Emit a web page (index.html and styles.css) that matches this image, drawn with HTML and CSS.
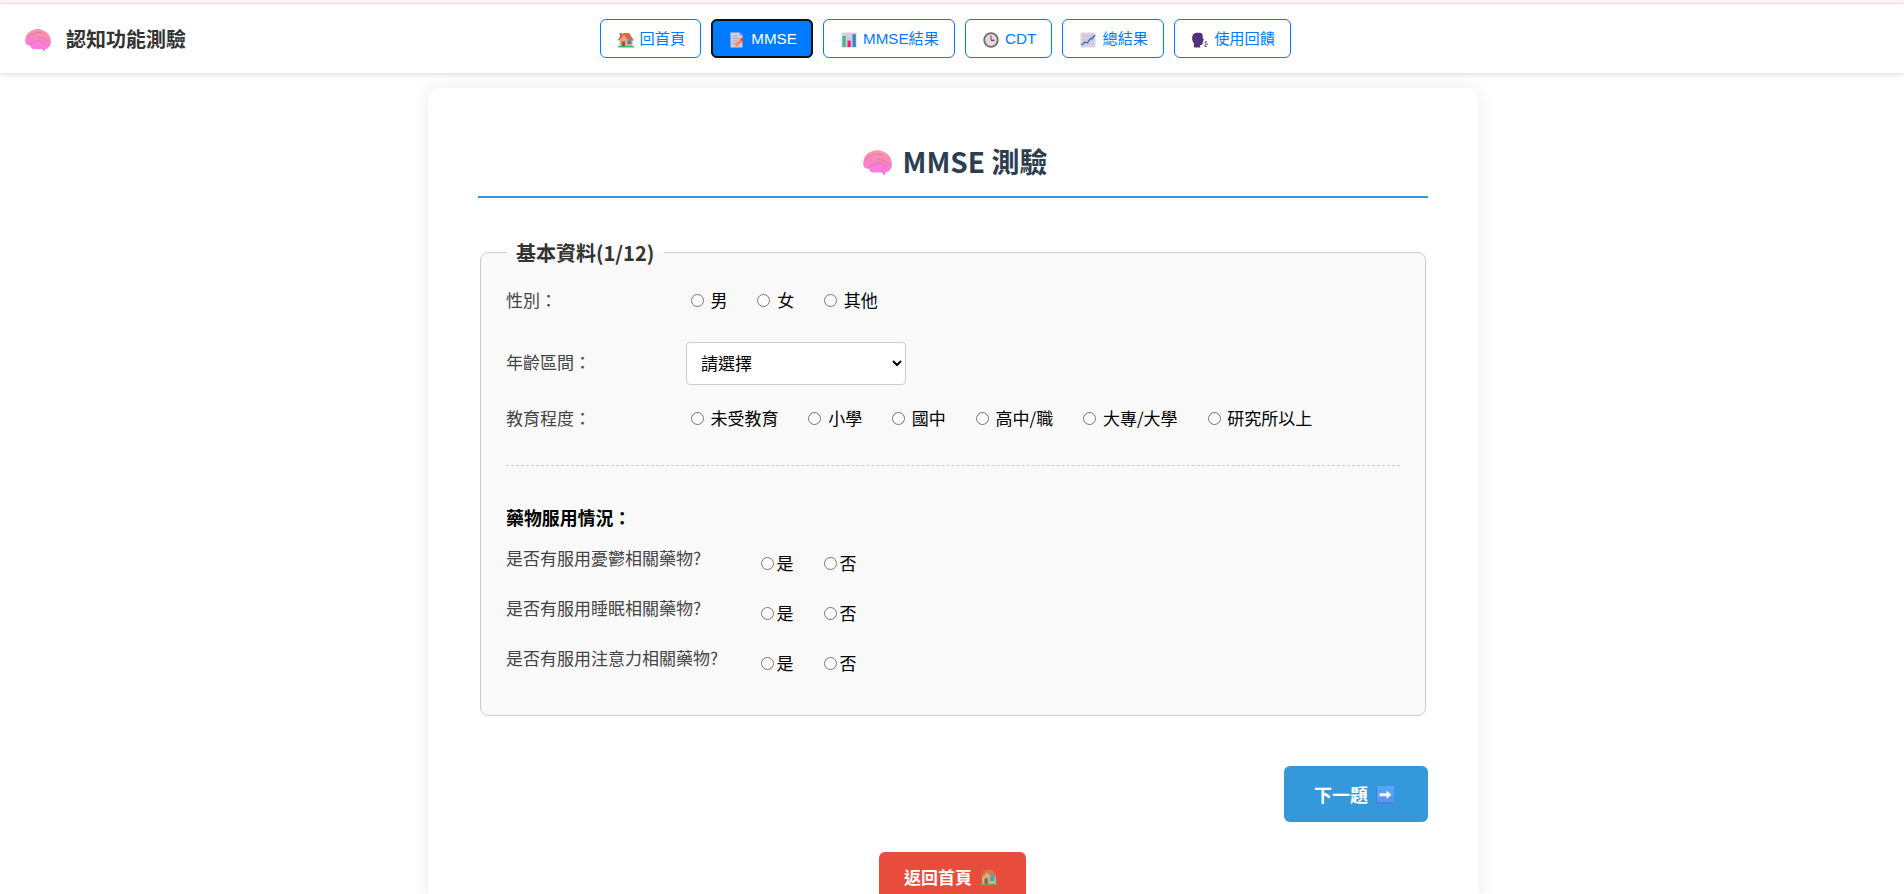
FILE: index.html
```html
<!DOCTYPE html>
<html lang="zh-Hant">
<head>
<meta charset="utf-8">
<title>認知功能測驗</title>
<link rel="stylesheet" href="styles.css">
</head>
<body>
<svg class="defs" aria-hidden="true">
  <defs>
    <linearGradient id="pink" x1="0.6" y1="0" x2="0.4" y2="1"><stop offset="0" stop-color="#fb9aa2"/><stop offset="0.55" stop-color="#f783c4"/><stop offset="1" stop-color="#fb78ee"/></linearGradient>
    <linearGradient id="blue" x1="0" y1="0" x2="0" y2="1"><stop offset="0" stop-color="#54a9fb"/><stop offset="1" stop-color="#5a92ee"/></linearGradient>
    <linearGradient id="paper" x1="0" y1="0" x2="1" y2="1"><stop offset="0" stop-color="#d9d0df"/><stop offset="1" stop-color="#cfc4df"/></linearGradient>
    <symbol id="brain" viewBox="0 0 26 23">
      <path d="M15.500 18.500 20 17.500 19.500 22.800 17 19.800Z" fill="#e95cbd"/>
      <path d="M.3 13C-.2 8 2.500 3.500 6.500 1.700c4-2.200 9-2 12.500 0 3.500 1.500 6 4.500 6.500 8 .8 3 .5 6-1.300 8-1.500 2-4 2.600-6.200 2.400H9C7 20 5.800 18.500 5.300 16.500 3 17 .8 15.500.3 13Z" fill="url(#pink)"/>
      <path d="M2.500 9.500c1-.5 1.500-3 3.500-4S10 4.500 12 3.500c2-.5 3 .8 5 .5M14 8c2 1.500 4 0 5 1.500s3 2 4.500 2.500M5.500 16c0-2 1-3 3.500-3s3-2 5.500-1.500S18 14.500 20.500 14.500" fill="none" stroke="#db6fae" stroke-width=".7" stroke-linecap="round"/>
    </symbol>
    <symbol id="house" viewBox="0 0 16 16">
      <rect x="1.800" y="1" width="2.200" height="5" fill="#c66a55"/>
      <path d="M1.500 8 6 3l8.500 4v7.500h-13Z" fill="#e0aa80"/>
      <path d="M5.500 1H11l5 7.500h-5.500L6 3 1 8.800 0 7.500Z" fill="#de6443"/>
      <rect x="9.500" y="8.300" width="3.800" height="3.700" fill="#338fcd"/>
      <rect x="3.800" y="9.500" width="3.200" height="5" fill="#91563e"/>
      <rect x="0" y="14" width="16" height="1.500" rx=".7" fill="#32bd76"/>
    </symbol>
    <symbol id="house-large" viewBox="0 0 18 18">
      <rect x="2.800" y="2" width="2.400" height="5" fill="#d36b4c"/>
      <path d="M2 9 7 4l9 5v7H2Z" fill="#d7ae7f"/>
      <path d="M6.500 1.800H12l5.500 7h-6L7 4.200 1.500 10 .5 8.500Z" fill="#c87d56"/>
      <rect x="10" y="8.800" width="4.400" height="4.200" fill="#2aa5ef"/>
      <rect x="4.500" y="10.500" width="3.300" height="5.500" fill="#8d6045"/>
      <rect x=".3" y="15.700" width="17.400" height="1.600" rx=".8" fill="#829b58"/>
    </symbol>
    <symbol id="memo" viewBox="0 0 16 16">
      <path d="M1.500.5h9l3 3v12h-12Z" fill="url(#paper)"/>
      <path d="M10.500.5v3h3Z" fill="#a69caf"/>
      <path d="M3.500 4h5M3.500 6.500h7M3.500 9h5M3.500 11.500h3" stroke="#a99fb5" stroke-width=".9"/>
      <path d="M6.500 13.500 13 8" stroke="#fb8749" stroke-width="3"/>
      <path d="M12.200 8.500 14 7" stroke="#df3e48" stroke-width="3.200"/>
      <path d="M4.500 15.200 5.500 12l2 2.300Z" fill="#e9bd91"/>
    </symbol>
    <symbol id="bars" viewBox="0 0 16 16">
      <rect x=".5" y=".5" width="15" height="15" rx="1" fill="url(#paper)"/>
      <rect x="1.500" y="4" width="3.200" height="11" fill="#3fba83"/>
      <rect x="6.500" y="8.500" width="3.200" height="6.500" fill="#e42573"/>
      <rect x="11.500" y="2.200" width="3.300" height="12.800" fill="#3b84cd"/>
    </symbol>
    <symbol id="clock" viewBox="0 0 16 16">
      <circle cx="8" cy="8" r="6.800" fill="#e0dae3" stroke="#6f6c73" stroke-width="1.800"/>
      <path d="M8 3.500V8" stroke="#d84662" stroke-width="1.300"/>
      <path d="M8 8.300h3.500" stroke="#504b59" stroke-width="1.300"/>
    </symbol>
    <symbol id="trend" viewBox="0 0 16 16">
      <rect x=".5" y=".5" width="15" height="15" rx="1" fill="#ddd4e4"/>
      <path d="M4 1v14M8 1v14M12 1v14M1 4h14M1 8h14M1 12h14" stroke="#c9b9d6" stroke-width=".7"/>
      <path d="m1.500 13 3.500-3 2.500.8 3-4.300 1.500.3L15 3" fill="none" stroke="#2978be" stroke-width="1.400"/>
    </symbol>
    <symbol id="speak" viewBox="0 0 16 16">
      <path d="M2 15.500v-4C-.5 9-.3 4 1.500 2 4 .4 8.800.4 10.500 2.300l.3 3.700 1.200 2-1 .7.200 1.300-.8.500.3.800-.5 1.500-2 .2v2.500Z" fill="#51307d"/>
      <path d="m13 10.500 1.300-.8M13.800 12.200h1.500M12.800 13.800l1.300.6" stroke="#67468f" stroke-width="1.300" stroke-linecap="round"/>
    </symbol>
    <symbol id="arrow" viewBox="0 0 18 18">
      <rect width="18" height="18" rx="1.500" fill="#417ddd"/>
      <rect x="1" width="17" height="16.500" rx="1" fill="url(#blue)"/>
      <path d="M3.500 7.300h7V4.500l5 4.200-5 4.300v-2.800h-7Z" fill="#fbf3ff"/>
    </symbol>
  </defs>
</svg>

<div class="top-strip"></div>
<header class="navbar">
  <div class="brand"><svg class="brand-icon"><use href="#brain"/></svg><span>認知功能測驗</span></div>
  <nav class="nav">
    <a class="nav-link"><svg class="emoji"><use href="#house"/></svg>回首頁</a>
    <a class="nav-link active"><svg class="emoji"><use href="#memo"/></svg>MMSE</a>
    <a class="nav-link"><svg class="emoji"><use href="#bars"/></svg>MMSE結果</a>
    <a class="nav-link"><svg class="emoji"><use href="#clock"/></svg>CDT</a>
    <a class="nav-link"><svg class="emoji"><use href="#trend"/></svg>總結果</a>
    <a class="nav-link"><svg class="emoji"><use href="#speak"/></svg>使用回饋</a>
  </nav>
</header>

<main class="card">
  <h1 class="title"><svg class="title-icon"><use href="#brain"/></svg><span>MMSE 測驗</span></h1>
  <form>
    <fieldset class="panel">
      <legend class="legend">基本資料(1/12)</legend>
      <div class="row gender">
        <span class="label">性別：</span>
        <div class="options">
          <label class="option"><input type="radio" name="gender">男</label>
          <label class="option"><input type="radio" name="gender">女</label>
          <label class="option"><input type="radio" name="gender">其他</label>
        </div>
      </div>
      <div class="row age">
        <label class="label" for="age">年齡區間：</label>
        <select class="select" id="age"><option>請選擇</option></select>
      </div>
      <div class="row education">
        <span class="label">教育程度：</span>
        <div class="options">
          <label class="option"><input type="radio" name="edu">未受教育</label>
          <label class="option"><input type="radio" name="edu">小學</label>
          <label class="option"><input type="radio" name="edu">國中</label>
          <label class="option"><input type="radio" name="edu">高中/職</label>
          <label class="option"><input type="radio" name="edu">大專/大學</label>
          <label class="option"><input type="radio" name="edu">研究所以上</label>
        </div>
      </div>
      <div class="medication">
        <h2 class="subtitle">藥物服用情況：</h2>
        <div class="question">
          <span class="question-text">是否有服用憂鬱相關藥物?</span>
          <div class="answers"><label class="answer"><input type="radio" name="m1">是</label><label class="answer"><input type="radio" name="m1">否</label></div>
        </div>
        <div class="question">
          <span class="question-text">是否有服用睡眠相關藥物?</span>
          <div class="answers"><label class="answer"><input type="radio" name="m2">是</label><label class="answer"><input type="radio" name="m2">否</label></div>
        </div>
        <div class="question">
          <span class="question-text">是否有服用注意力相關藥物?</span>
          <div class="answers"><label class="answer"><input type="radio" name="m3">是</label><label class="answer"><input type="radio" name="m3">否</label></div>
        </div>
      </div>
    </fieldset>
    <div class="next-row"><button type="button" class="btn next">下一題<svg class="btn-icon"><use href="#arrow"/></svg></button></div>
    <div class="home-row"><button type="button" class="btn home">返回首頁<svg class="btn-icon"><use href="#house-large"/></svg></button></div>
  </form>
</main>
</body>
</html>
```
FILE: styles.css
```css
* { box-sizing: border-box; }

html { height: 100%; overflow: hidden; }

body {
  margin: 0;
  height: 100%;
  overflow: hidden;
  background: #fff;
  color: #000;
  font-family: "Noto Sans CJK TC", sans-serif;
  font-size: 17px;
}

.defs { position: absolute; width: 0; height: 0; }

.top-strip { height: 4px; background: #fff5f8; border-bottom: 1px solid #eddde2; }

.navbar {
  display: flex;
  align-items: center;
  height: 69px;
  padding: 0 25px;
  background: #fff;
  box-shadow: 0 2px 4px rgba(0, 0, 0, .12);
}

.brand {
  display: flex;
  align-items: center;
  gap: 15px;
  width: 574.600px;
  color: #333;
  font-size: 20px;
  font-weight: 700;
}
.brand-icon { width: 26px; height: 23px; margin-top: 4px; }

.nav { display: flex; gap: 10.150px; }

.nav-link {
  display: flex;
  align-items: center;
  height: 39px;
  padding: 0 15px;
  border: 1px solid #007bff;
  border-radius: 6px;
  color: #007bff;
  font-family: "Liberation Sans", "Noto Sans CJK TC", sans-serif;
  font-size: 15.200px;
  line-height: 22px;
}
.nav-link.active { background: #007bff; color: #fff; outline: 2px solid #101010; outline-offset: -2px; }

.emoji { width: 16px; height: 16px; margin: 2px 6px 0 2px; }

.card {
  width: 1050px;
  margin: 15px auto 0;
  margin-left: 428px;
  padding: 50px 50px 0;
  background: #fff;
  border-radius: 10px;
  box-shadow: 0 0 20px rgba(0, 0, 0, .08);
}

.title {
  display: flex;
  justify-content: center;
  align-items: center;
  gap: 11px;
  height: 60px;
  margin: 0 0 54px;
  padding: 0 0 11px 4px;
  border-bottom: 2px solid #3498db;
  color: #2c3e50;
  font-size: 28px;
  line-height: 47px;
}
.title-icon { width: 29px; height: 26px; margin-top: 3px; }

.panel {
  height: 479px;
  margin: -15px 2px 0;
  padding: 0 25px;
  border: 1px solid #ccc;
  border-radius: 8px;
  background: #f9f9f9;
}
.legend { padding: 2px 10px 0; color: #333; font-size: 20px; font-weight: 700; line-height: 28px; }

.row { display: flex; align-items: center; }
.gender { height: 24px; margin-top: 21px; }
.age { height: 43px; margin-top: 30px; }
.education { height: 24px; margin-top: 21px; }

.label { width: 180px; color: #444; line-height: 24px; }
.age .label { padding-bottom: 3px; }
.options { display: flex; gap: 30px; padding-left: 4.800px; }
.option, .answer { display: flex; align-items: center; line-height: 24px; }
.option input { width: 13px; height: 13px; margin: 0 6.700px 0 0; }

.select {
  width: 220px;
  height: 43px;
  padding: 0 10px 2px;
  border: 1px solid #ccc;
  border-radius: 4px;
  background: #fff;
  color: #000;
  font: inherit;
}

.medication { margin-top: 35px; padding-top: 38px; border-top: 1px dashed #ccc; }
.subtitle { margin: 0 0 16px; font-size: 17.900px; line-height: 26px; }
.question { display: flex; height: 50px; }
.question-text { width: 255px; color: #444; line-height: 24px; }
.answers { display: flex; align-items: flex-start; gap: 30.300px; padding-top: 5px; }
.answer input { width: 13px; height: 13px; margin: 0 2.600px 0 0; }

.next-row { display: flex; justify-content: flex-end; margin-top: 50px; }
.home-row { display: flex; justify-content: center; height: 50px; margin: 30px 1px 0 0; overflow: hidden; }

.btn {
  display: flex;
  align-items: center;
  justify-content: center;
  gap: 8px;
  border: 0;
  border-radius: 6px;
  color: #fff;
  font-family: inherit;
  font-weight: 700;
}
.btn-icon { width: 18px; height: 18px; margin-top: 2px; }
.next { width: 144px; height: 56px; padding: 0 4px 0 0; background: #3498db; font-size: 18px; }
.home { width: 147px; height: 50px; padding: 0 3px 2px 0; background: #e74c3c; font-size: 17px; }
```
